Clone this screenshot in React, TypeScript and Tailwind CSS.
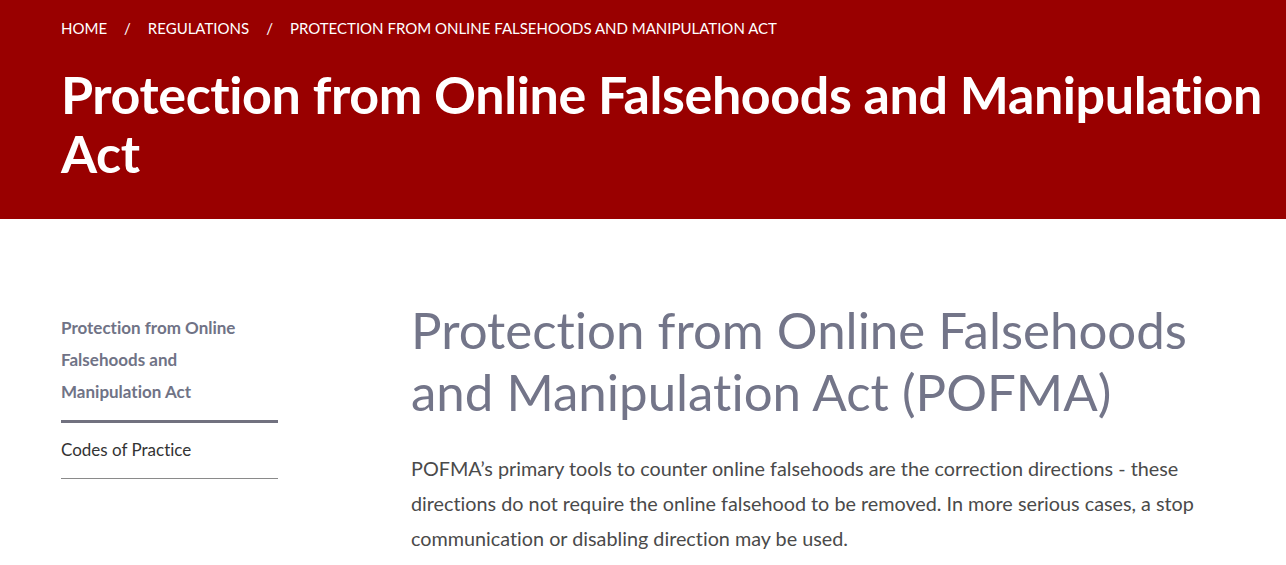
import React from 'react';

const crumbs = ['HOME', 'REGULATIONS', 'PROTECTION FROM ONLINE FALSEHOODS AND MANIPULATION ACT'];

const sideLinks = [
  { label: 'Protection from Online Falsehoods and Manipulation Act', active: true },
  { label: 'Codes of Practice', active: false },
];

export default function App() {
  return (
    <div className="min-h-screen bg-white font-['Lato',_'Liberation_Sans',_sans-serif] [font-variant-ligatures:none]">
      {/* Banner */}
      <header className="h-[219px] bg-[#990000] pl-[61px] pr-4 pt-[17px] text-white">
        <nav className="flex items-center text-[15px] leading-[22px]">
          {crumbs.map((c, i) => (
            <React.Fragment key={c}>
              {i > 0 && <span className="px-[17px]">/</span>}
              <span>{c}</span>
            </React.Fragment>
          ))}
        </nav>
        <h1 className="mt-[26px] text-[52px] font-bold leading-[59px] tracking-[-0.4px]">
          Protection from Online Falsehoods and Manipulation Act
        </h1>
      </header>

      {/* Body */}
      <div className="flex pl-[61px] pt-[93px]">
        <aside className="w-[217px] shrink-0">
          {sideLinks.map((l) => (
            <div
              key={l.label}
              className={
                l.active
                  ? 'border-b-[3px] border-[#71717f] pb-[12px] text-[17px] font-bold leading-[32px] text-[#707386]'
                  : 'border-b border-[#8a8a8a] pt-[11px] pb-[12px] text-[17px] leading-[32px] text-[#333333]'
              }
            >
              {l.label}
            </div>
          ))}
        </aside>

        <main className="ml-[133px] max-w-[800px]">
          <h2 className="mt-[-13px] text-[51px] font-normal leading-[62px] text-[#737589]">
            Protection from Online Falsehoods and Manipulation Act (POFMA)
          </h2>
          <p className="mt-[28px] text-[19.8px] leading-[35px] text-[#4a4a4a]">
            POFMA’s primary tools to counter online falsehoods are the correction directions - these
            directions do not require the online falsehood to be removed. In more serious cases, a stop
            communication or disabling direction may be used.
          </p>
        </main>
      </div>
    </div>
  );
}
